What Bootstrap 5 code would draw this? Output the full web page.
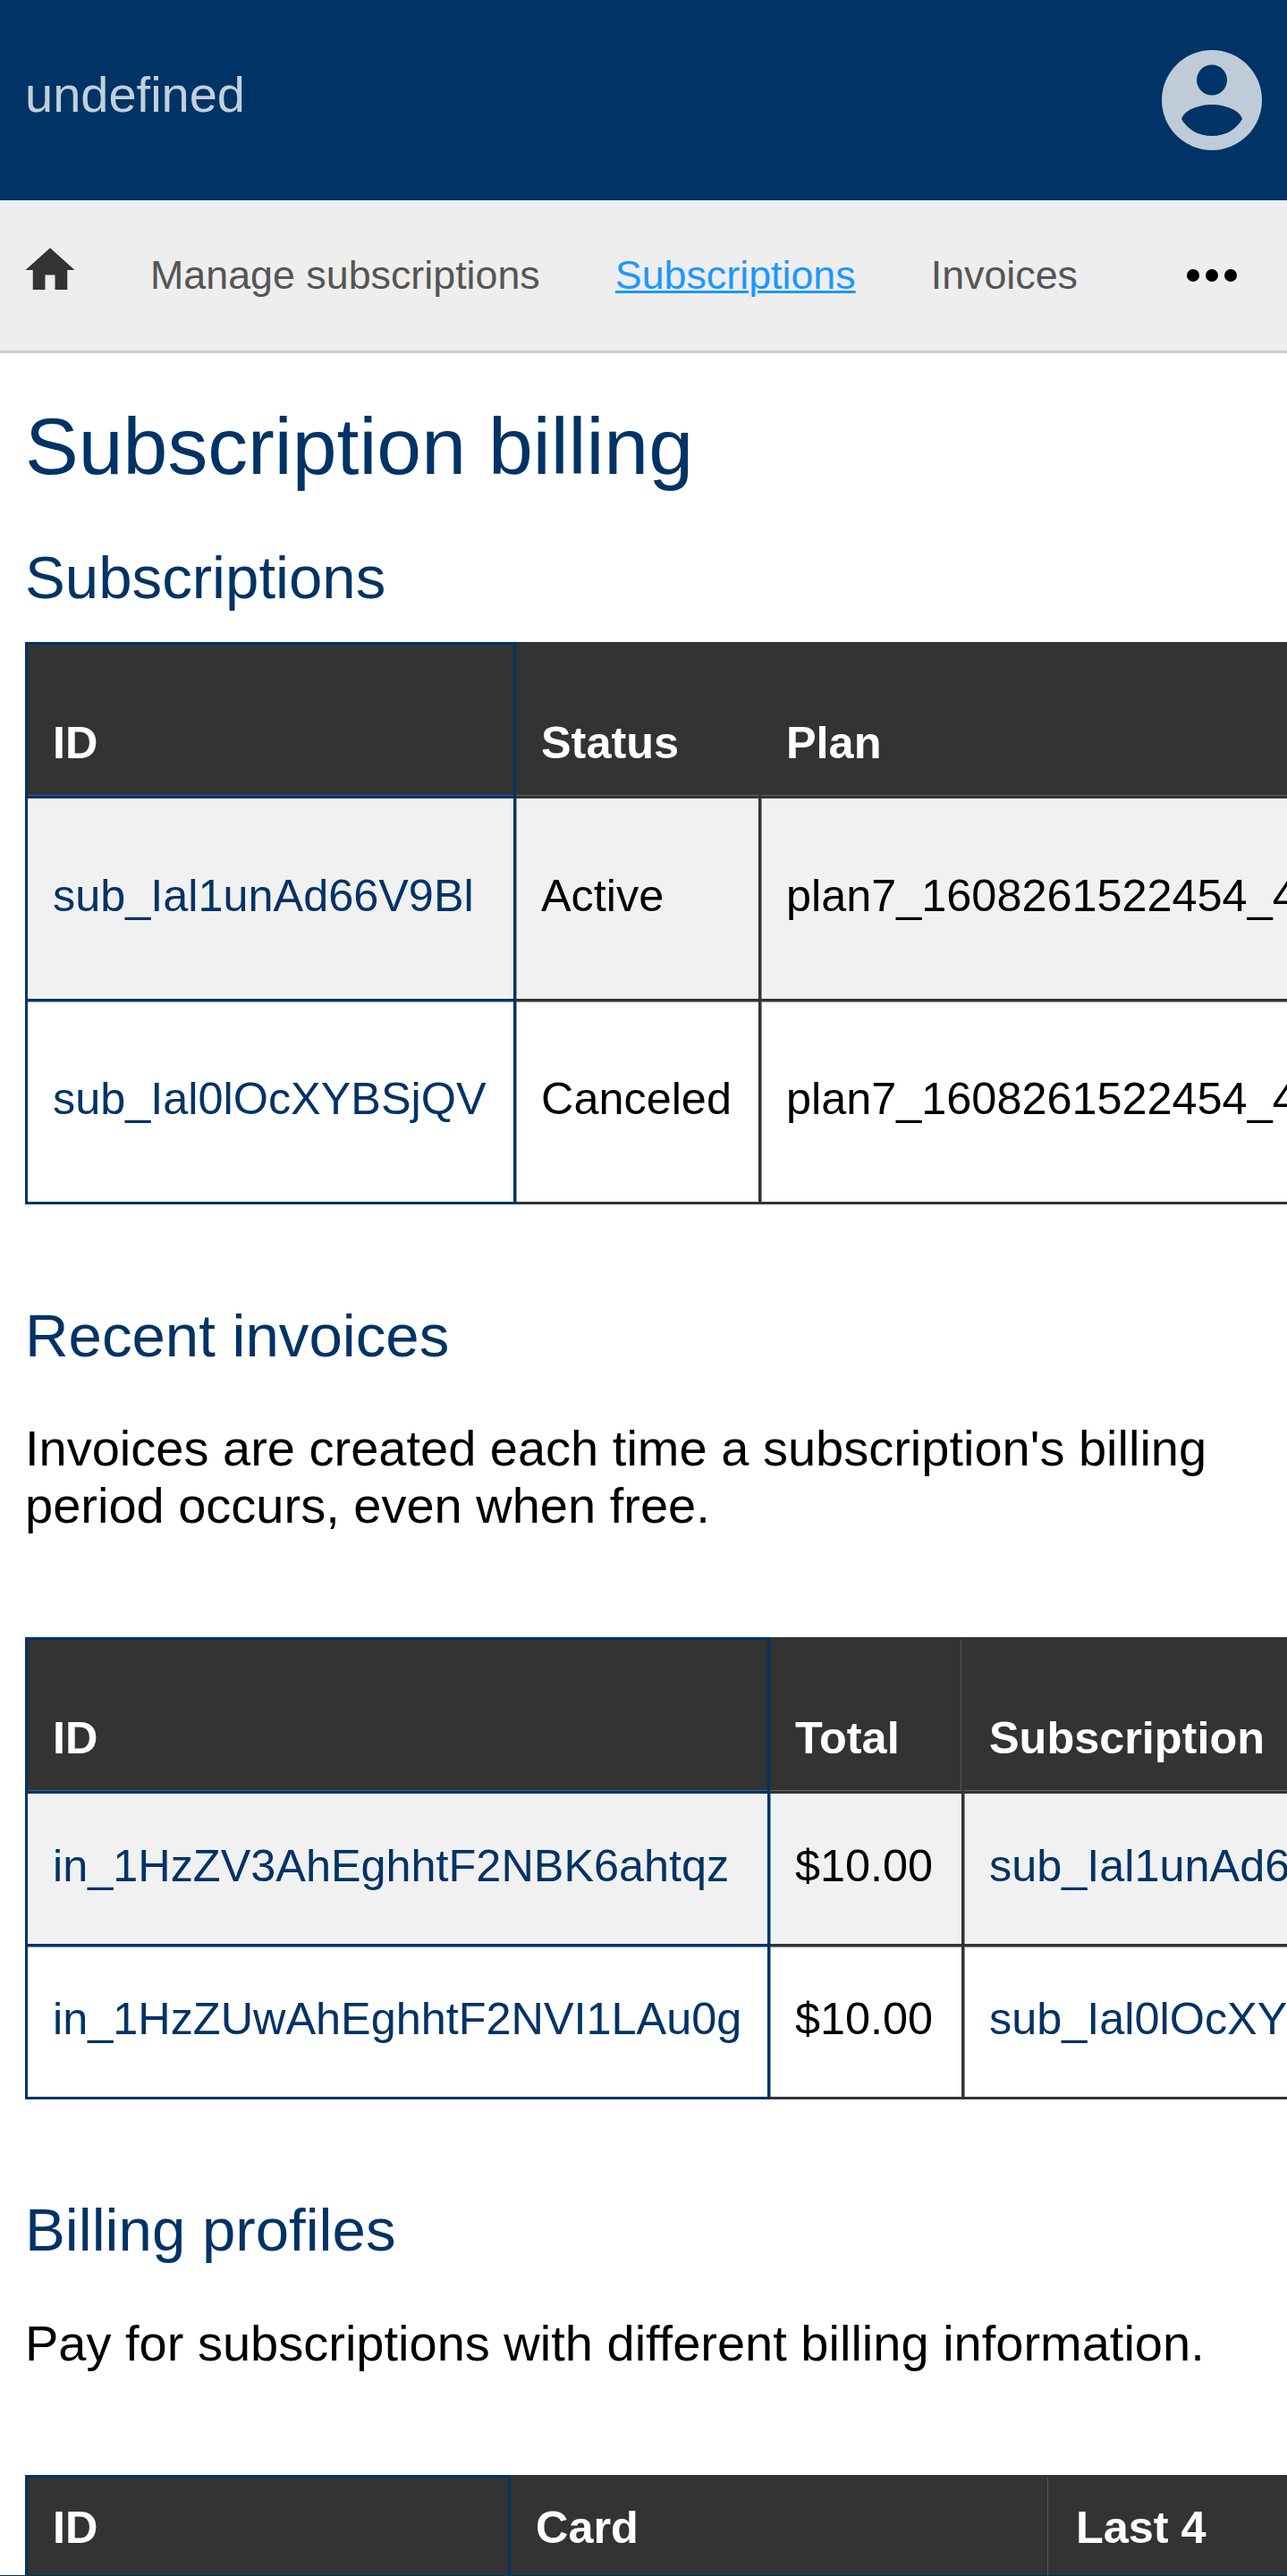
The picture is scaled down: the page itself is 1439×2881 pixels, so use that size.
<!DOCTYPE html>
<html lang="en">
<head>
    <meta charset="UTF-8">
    <meta name="viewport" content="width=device-width, initial-scale=1.0">
    <title>Subscription billing</title>
    <link href="https://cdn.jsdelivr.net/npm/bootstrap@5.3.0/dist/css/bootstrap.min.css" rel="stylesheet">
    <style>
        html, body {
            height: 100vh;
            overflow: hidden;
        }
        body {
            font-family: "Liberation Sans", Arial, sans-serif;
            font-size: 56px;
            line-height: 64px;
            color: #000;
        }
        .top-bar {
            height: 224px;
            background-color: #003366;
            padding: 0 28px;
        }
        .site-name {
            font-size: 56px;
            color: #c3cfdb;
            margin-top: -12px;
        }
        .avatar {
            width: 112px;
            height: 112px;
        }
        .sub-nav {
            height: 171px;
            background-color: #eee;
            border-bottom: 3px solid #ccc;
            padding: 0 28px 0 23px;
            font-size: 44.8px;
            gap: 84px;
        }
        .sub-nav a {
            color: #555;
            text-decoration: none;
            margin-bottom: 2px;
        }
        .sub-nav a.current {
            color: #1a98ff;
            text-decoration: underline;
            text-decoration-thickness: 3px;
        }
        .home-icon {
            width: 66px;
            height: 66px;
            fill: #333;
            margin-top: -11px;
            margin-right: -5px;
        }
        .more-dots {
            width: 56px;
            height: 14px;
            margin-right: 28px;
        }
        .page-body {
            padding-left: 28px;
        }
        .page-title {
            font-size: 89.6px;
            line-height: 104px;
            color: #003366;
            margin: 52px 0 0;
        }
        .section-title {
            font-size: 67.2px;
            line-height: 88px;
            color: #003366;
            margin: 0;
        }
        .first-title {
            margin-top: 51px;
            margin-bottom: 28px;
        }
        .intro {
            margin: 0;
        }
        .table-clip {
            overflow: hidden;
        }
        .billing-table {
            table-layout: fixed;
            width: 2600px;
            border-collapse: separate;
            border-spacing: 0;
            margin: 0;
            font-size: 50.4px;
            line-height: 64px;
        }
        .billing-table th {
            background-color: #333;
            color: #fff;
            font-weight: 700;
            padding: 0 30px 27px 28px;
            height: 175px;
            vertical-align: bottom;
            border-top: 3px solid #333;
            border-right: 3px solid #333;
            border-bottom: 3px solid #333;
            box-shadow: inset 0 -1px 0 #666;
        }
        .ruled th {
            box-shadow: inset 0 -1px 0 #666, inset -1px 0 0 #555;
        }
        .billing-table td {
            padding: 0 30px 7px 28px;
            vertical-align: middle;
            white-space: nowrap;
            color: #000;
            background-color: #fff;
            border-right: 3px solid #333;
            border-bottom: 3px solid #333;
            box-shadow: inset 1px 0 0 #8c8c8c;
        }
        .billing-table tr + tr td {
            box-shadow: inset 1px 1px 0 #8c8c8c;
        }
        .billing-table tbody tr:nth-child(odd) td {
            background-color: #f1f1f1;
        }
        .billing-table th:first-child,
        .billing-table td:first-child {
            border-left: 3px solid #003366;
            border-right: 3px solid #003366;
        }
        .billing-table th:first-child {
            border-top-color: #003366;
            border-bottom-color: #003366;
            box-shadow: inset 0 -1px 0 #2f5f8f;
        }
        .billing-table td:first-child {
            border-bottom-color: #003366;
            box-shadow: none;
        }
        .billing-table tr + tr td:first-child {
            box-shadow: inset 0 1px 0 #7f99b2;
        }
        .billing-table td:nth-child(2) {
            box-shadow: inset 1px 0 0 #7f99b2;
        }
        .billing-table tr + tr td:nth-child(2) {
            box-shadow: inset 1px 0 0 #7f99b2, inset 0 1px 0 #8c8c8c;
        }
        .billing-table a {
            color: #003366;
            text-decoration: none;
        }
        .tall-rows td {
            height: 227px;
        }
        .short-rows td {
            height: 171px;
        }
        .subs-id { width: 549px; }
        .subs-status { width: 274px; }
        .inv-id { width: 833px; }
        .inv-total { width: 217px; }
        .prof-id { width: 543px; }
        .prof-card { width: 604px; }
        .billing-table .head-only {
            height: 121px;
        }
        .invoices-title {
            margin-top: 103px;
            margin-bottom: 50px;
        }
        .invoices-intro {
            margin-bottom: 115px;
        }
        .profiles-title {
            margin-top: 102px;
            margin-bottom: 51px;
        }
        .profiles-intro {
            margin-bottom: 115px;
        }
        .page-edge {
            height: 1px;
            background-color: #003366;
        }
    </style>
</head>
<body>
    <header class="top-bar d-flex align-items-center justify-content-between">
        <div class="site-name">undefined</div>
        <svg class="avatar" viewBox="0 0 112 112" aria-label="Account">
            <circle cx="56" cy="56" r="56" fill="#bfcbd8"/>
            <circle cx="56" cy="33.5" r="17" fill="#003366"/>
            <path d="M22 77C25 67 42 61 56 61C70 61 87 67 90 77C84 88 72 96 56 96C40 96 28 88 22 77Z" fill="#003366"/>
        </svg>
    </header>

    <nav class="sub-nav d-flex align-items-center">
        <a href="#" class="d-flex" aria-label="Home">
            <svg class="home-icon" viewBox="0 0 24 24"><path d="M10 20v-6h4v6h5v-8h3L12 3 2 12h3v8z"/></svg>
        </a>
        <a href="#">Manage subscriptions</a>
        <a href="#" class="current">Subscriptions</a>
        <a href="#">Invoices</a>
        <svg class="more-dots ms-auto" viewBox="0 0 56 14" aria-label="More">
            <circle cx="7" cy="7" r="7"/>
            <circle cx="28" cy="7" r="7"/>
            <circle cx="49" cy="7" r="7"/>
        </svg>
    </nav>

    <main class="page-body">
        <h1 class="page-title">Subscription billing</h1>

        <h2 class="section-title first-title">Subscriptions</h2>
        <div class="table-clip">
            <table class="table billing-table tall-rows">
                <colgroup>
                    <col class="subs-id">
                    <col class="subs-status">
                    <col>
                </colgroup>
                <thead>
                    <tr><th>ID</th><th>Status</th><th>Plan</th></tr>
                </thead>
                <tbody>
                    <tr>
                        <td><a href="#">sub_Ial1unAd66V9Bl</a></td>
                        <td>Active</td>
                        <td>plan7_1608261522454_4</td>
                    </tr>
                    <tr>
                        <td><a href="#">sub_Ial0lOcXYBSjQV</a></td>
                        <td>Canceled</td>
                        <td>plan7_1608261522454_4</td>
                    </tr>
                </tbody>
            </table>
        </div>

        <h2 class="section-title invoices-title">Recent invoices</h2>
        <p class="intro invoices-intro">Invoices are created each time a subscription's billing<br>period occurs, even when free.</p>
        <div class="table-clip">
            <table class="table billing-table short-rows ruled">
                <colgroup>
                    <col class="inv-id">
                    <col class="inv-total">
                    <col>
                </colgroup>
                <thead>
                    <tr><th>ID</th><th>Total</th><th>Subscription</th></tr>
                </thead>
                <tbody>
                    <tr>
                        <td><a href="#">in_1HzZV3AhEghhtF2NBK6ahtqz</a></td>
                        <td>$10.00</td>
                        <td><a href="#">sub_Ial1unAd66V9Bl</a></td>
                    </tr>
                    <tr>
                        <td><a href="#">in_1HzZUwAhEghhtF2NVI1LAu0g</a></td>
                        <td>$10.00</td>
                        <td><a href="#">sub_Ial0lOcXYBSjQV</a></td>
                    </tr>
                </tbody>
            </table>
        </div>

        <h2 class="section-title profiles-title">Billing profiles</h2>
        <p class="intro profiles-intro">Pay for subscriptions with different billing information.</p>
        <div class="table-clip">
            <table class="table billing-table ruled">
                <colgroup>
                    <col class="prof-id">
                    <col class="prof-card">
                    <col>
                </colgroup>
                <thead>
                    <tr><th class="head-only">ID</th><th class="head-only">Card</th><th class="head-only">Last 4</th></tr>
                </thead>
            </table>
        </div>
    </main>

    <div class="page-edge fixed-bottom"></div>
</body>
</html>
